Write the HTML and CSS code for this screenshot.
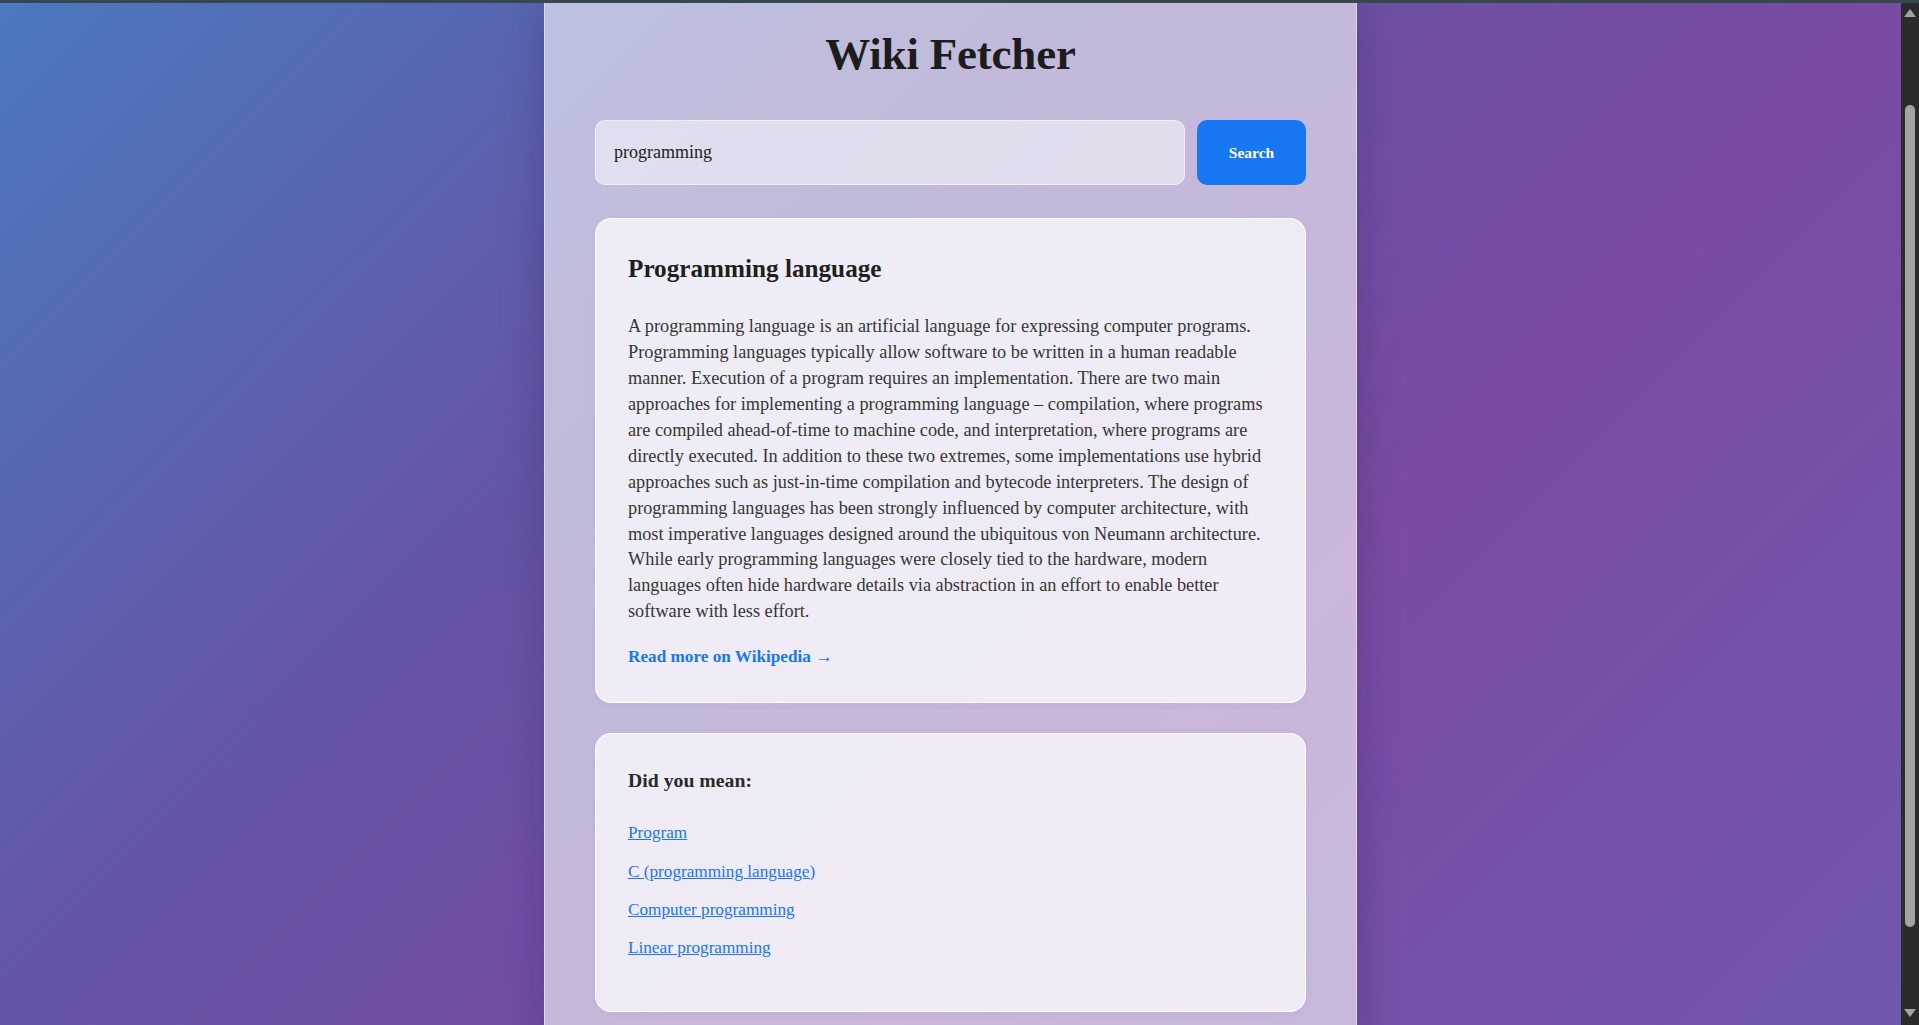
FILE: index.html
```html
<!DOCTYPE html>
<html lang="en">
<head>
<meta charset="utf-8">
<title>Wiki Fetcher</title>
<link rel="stylesheet" href="styles.css">
</head>
<body>
<div class="topbar"></div>
<div class="window">
  <main class="page">
    <div class="panel">
      <h1 class="title">Wiki Fetcher</h1>
      <form class="search">
        <input class="search-input" type="text" value="programming">
        <button class="search-btn" type="button">Search</button>
      </form>
      <section class="card result">
        <h2 class="result-title">Programming language</h2>
        <p class="result-text">A programming language is an artificial language for expressing computer programs. Programming languages typically allow software to be written in a human readable manner. Execution of a program requires an implementation. There are two main approaches for implementing a programming language – compilation, where programs are compiled ahead-of-time to machine code, and interpretation, where programs are directly executed. In addition to these two extremes, some implementations use hybrid approaches such as just-in-time compilation and bytecode interpreters. The design of programming languages has been strongly influenced by computer architecture, with most imperative languages designed around the ubiquitous von Neumann architecture. While early programming languages were closely tied to the hardware, modern languages often hide hardware details via abstraction in an effort to enable better software with less effort.</p>
        <a class="read-more" href="#">Read more on Wikipedia →</a>
      </section>
      <section class="card suggestions">
        <h3 class="suggest-title">Did you mean:</h3>
        <ul class="suggest-list">
          <li><a href="#">Program</a></li>
          <li><a href="#">C (programming language)</a></li>
          <li><a href="#">Computer programming</a></li>
          <li><a href="#">Linear programming</a></li>
        </ul>
      </section>
    </div>
  </main>
  <div class="scrollbar" aria-hidden="true">
    <span class="sb-up"></span>
    <span class="sb-thumb"></span>
    <span class="sb-down"></span>
  </div>
</div>
</body>
</html>
```

FILE: styles.css
```css
html,
body {
  height: 100%;
}

body {
  margin: 0;
  overflow: hidden;
  display: flex;
  flex-direction: column;
  font-family: "Liberation Serif", "Times New Roman", serif;
  color: #222;
}

.topbar {
  height: 3px;
  flex: none;
  background: #37474f;
}

.window {
  flex: 1;
  min-height: 0;
  display: flex;
}

.page {
  flex: 1;
  min-width: 0;
  overflow: hidden;
  background: linear-gradient(135deg, #4b79bf 0%, #6654a6 35%, #7a4ba3 65%, #7157ae 100%);
  display: flex;
  justify-content: center;
  align-items: flex-start;
}

.panel {
  width: 711px;
  min-height: 100%;
  padding: 25px 50px 60px;
  background: rgba(255, 255, 255, 0.6);
  border-left: 1px solid rgba(255, 255, 255, 0.45);
  border-right: 1px solid rgba(255, 255, 255, 0.45);
  box-shadow: 0 0 40px rgba(20, 10, 60, 0.25);
}

.title {
  margin: 0 0 40px;
  font-size: 45px;
  line-height: 52px;
  font-weight: 700;
  letter-spacing: -0.2px;
  text-align: center;
  color: #1c1c1e;
}

.search {
  display: flex;
  gap: 12px;
  margin: 0 0 33px;
}

.search-input {
  flex: 1;
  height: 65px;
  box-sizing: border-box;
  padding: 0 18px;
  border: 1px solid rgba(255, 255, 255, 0.5);
  border-radius: 10px;
  background: rgba(255, 255, 255, 0.5);
  font-family: inherit;
  font-size: 18px;
  color: #222;
  outline: none;
}

.search-btn {
  width: 109px;
  height: 65px;
  border: 0;
  border-radius: 10px;
  background: #1877f2;
  color: #fff;
  font-family: inherit;
  font-size: 15.5px;
  font-weight: 700;
}

.card {
  padding: 32px;
  background: rgba(255, 255, 255, 0.72);
  border: 1px solid rgba(255, 255, 255, 0.85);
  border-radius: 16px;
  box-shadow: 0 2px 10px rgba(60, 40, 120, 0.04);
}

.result {
  margin-bottom: 30px;
}

.result-title {
  margin: 0 0 27px;
  font-size: 25.2px;
  line-height: 36px;
  font-weight: 700;
  color: #1f1f1f;
}

.result-text {
  margin: 0 0 19px;
  font-size: 18.3px;
  line-height: 25.93px;
  color: #363636;
}

.read-more {
  display: block;
  font-size: 17.2px;
  line-height: 26px;
  font-weight: 700;
  color: #1877f2;
  text-decoration: none;
}

.suggest-title {
  margin: 0 0 27px;
  font-size: 19.75px;
  line-height: 28px;
  font-weight: 700;
  color: #2a2a2a;
}

.suggest-list {
  list-style: none;
  margin: 0 0 19px;
  padding: 0;
  display: flex;
  flex-direction: column;
  gap: 14.3px;
}

.suggest-list li {
  line-height: 24px;
}

.suggest-list a {
  font-size: 17.2px;
  color: #1877f2;
  text-decoration: underline;
}

/* browser scrollbar as it appears in the capture */
.scrollbar {
  width: 18px;
  flex: none;
  background: #2b2b2b;
  display: flex;
  flex-direction: column;
  align-items: center;
}

.sb-up {
  margin-top: 6px;
  width: 0;
  height: 0;
  border-left: 6px solid transparent;
  border-right: 6px solid transparent;
  border-bottom: 8px solid #a3a3a3;
}

.sb-thumb {
  margin-top: 88px;
  width: 10px;
  height: 822px;
  border-radius: 5px;
  background: #a3a3a3;
}

.sb-down {
  margin-top: auto;
  margin-bottom: 8px;
  width: 0;
  height: 0;
  border-left: 6px solid transparent;
  border-right: 6px solid transparent;
  border-top: 8px solid #a3a3a3;
}
```
